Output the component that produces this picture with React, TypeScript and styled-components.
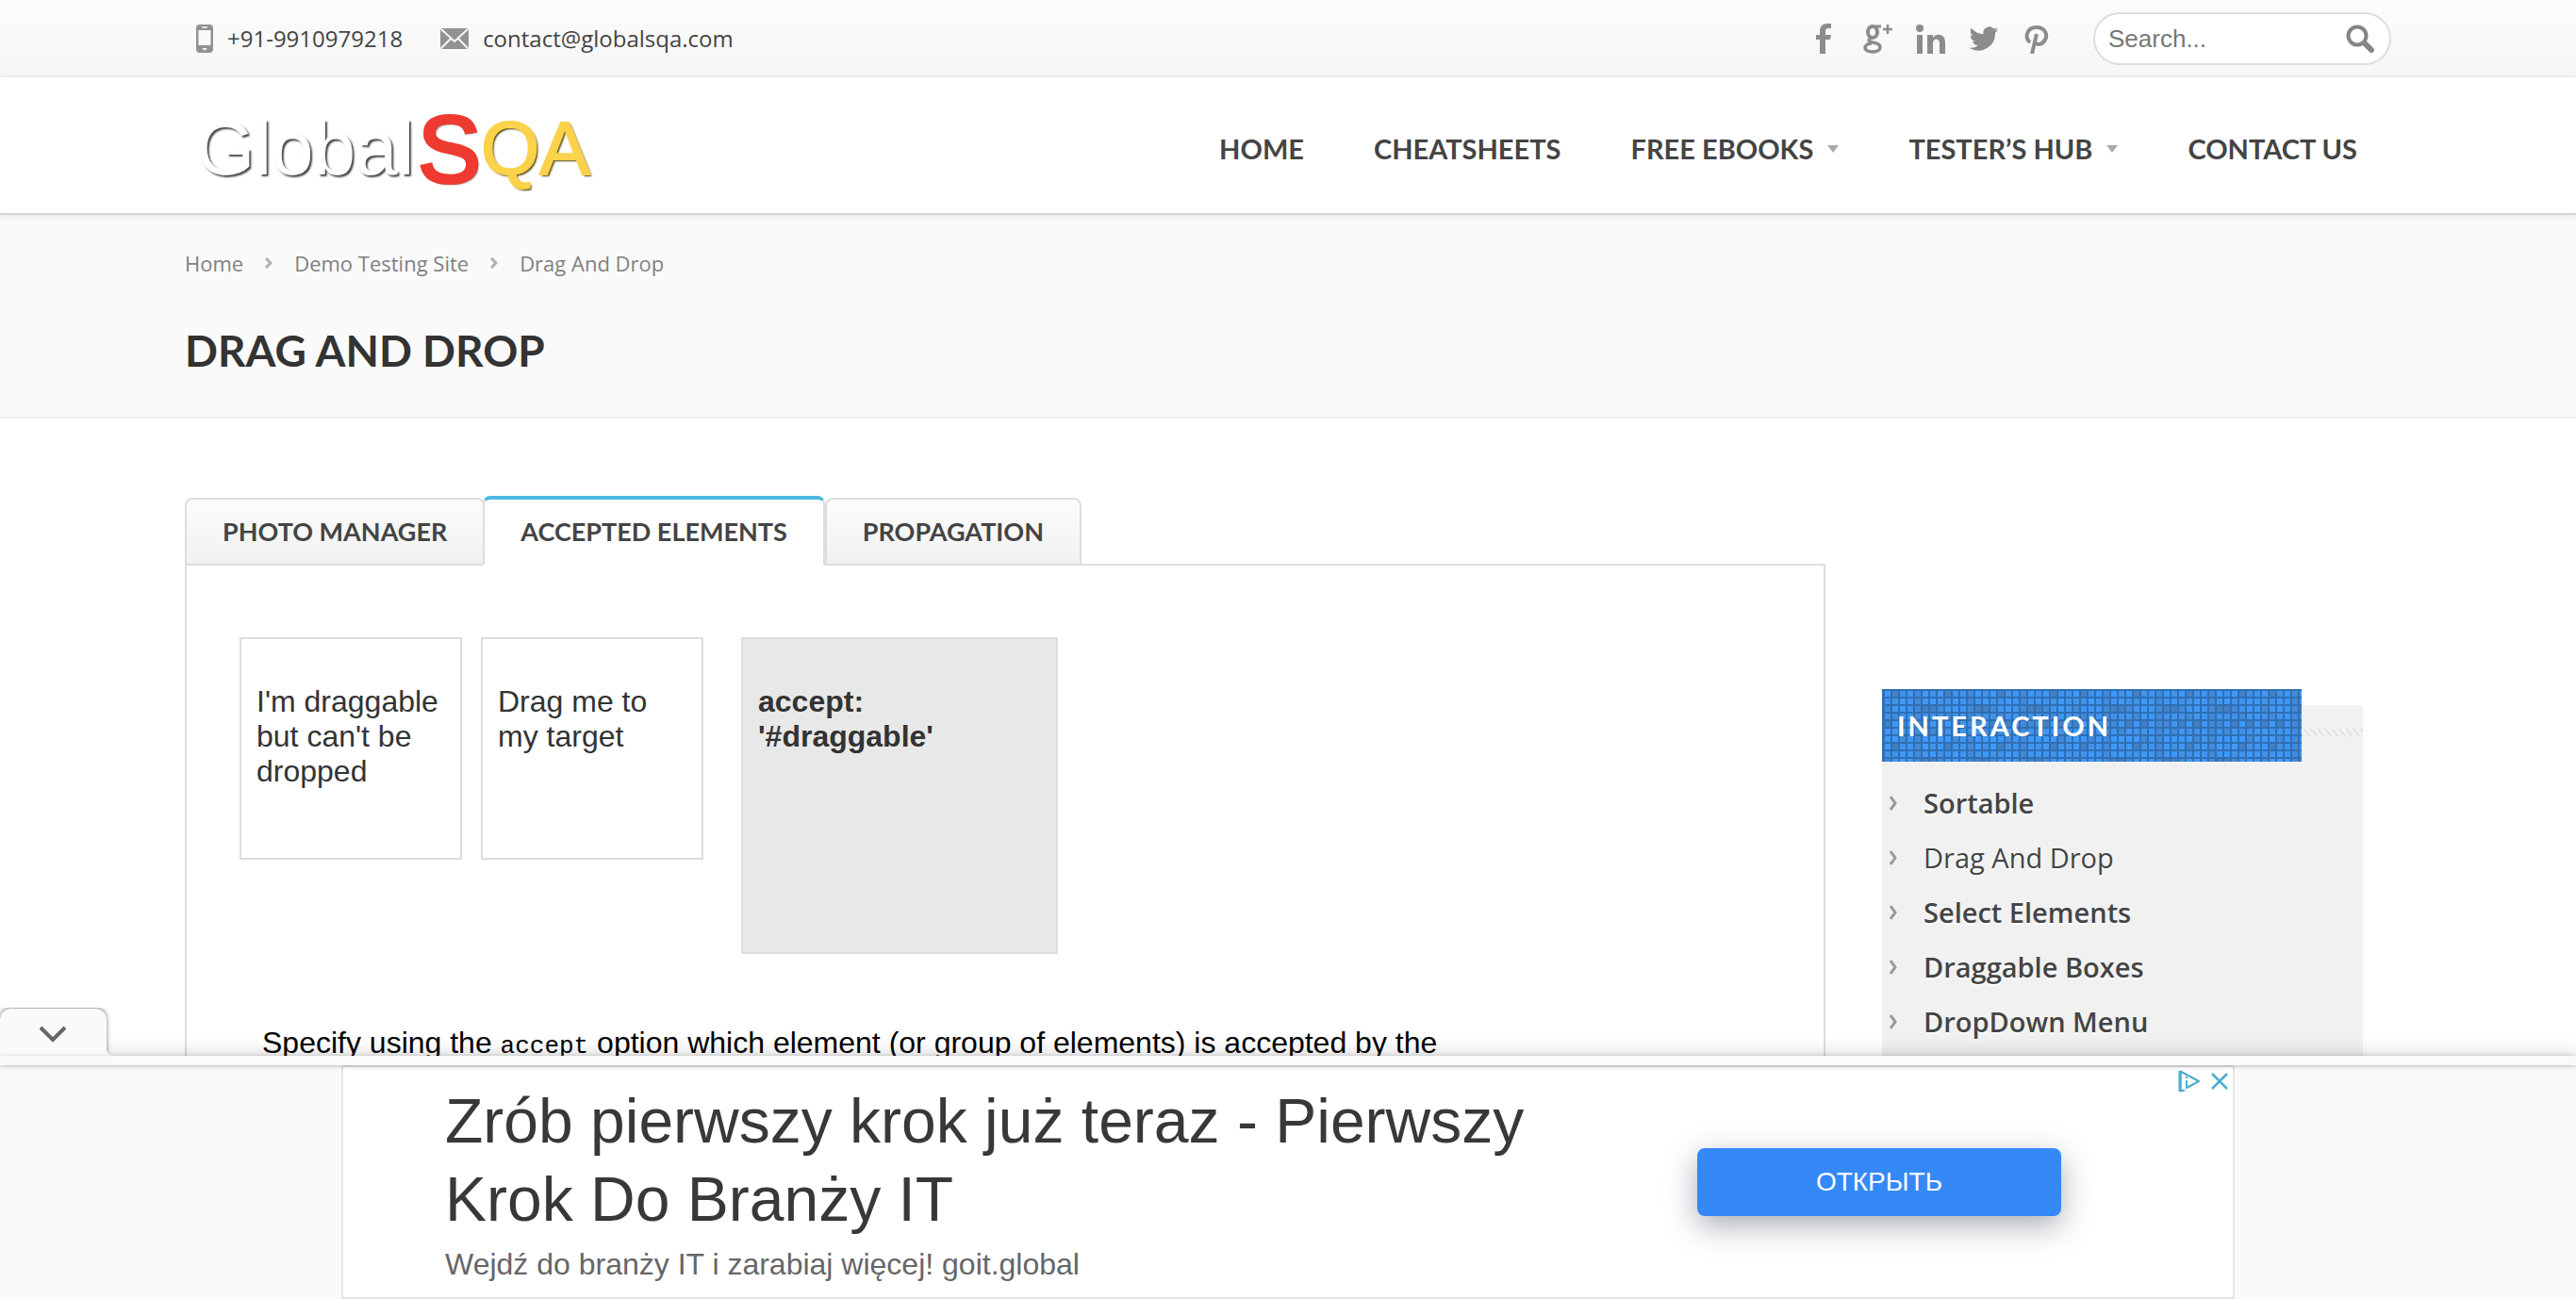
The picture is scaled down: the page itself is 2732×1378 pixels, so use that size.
import React from 'react';
import styled, { createGlobalStyle } from 'styled-components';

const display = "Lato, 'Open Sans', sans-serif";
const body = "'Open Sans', 'Noto Sans', sans-serif";
const arial = "'Liberation Sans', Arial, sans-serif";

const GlobalStyle = createGlobalStyle`
  *, *::before, *::after { box-sizing: border-box; }
  body { margin: 0; background: #fff; color: #444; font-family: ${body}; }
  a { color: inherit; text-decoration: none; }
  ul, ol { list-style: none; margin: 0; padding: 0; }
  button { font: inherit; color: inherit; border: 0; background: none; padding: 0; cursor: pointer; }
`;

const Page = styled.div`
  display: flex;
  flex-direction: column;
  height: 100vh;
  overflow: hidden;
`;

const Container = styled.div`
  width: 100%;
  max-width: 2340px;
  margin: 0 auto;
`;

const TopBar = styled.div`
  flex: none;
  background: linear-gradient(#fcfcfc, #f6f6f6);
  border-bottom: 2px solid #eee;
`;

const TopRow = styled(Container)`
  display: flex;
  align-items: center;
  padding: 13px 0 11px 12px;
`;

const Contact = styled.a`
  display: flex;
  align-items: center;
  gap: 15px;
  margin-right: 40px;
  font-size: 24px;
  line-height: 32px;
`;

const Socials = styled.nav`
  display: flex;
  align-items: center;
  gap: 24px;
  margin: 0 44px 0 auto;
  color: #8b8c8d;

  a { display: flex; }
`;

const SearchForm = styled.form`
  display: flex;
  align-items: center;
  width: 316px;
  height: 56px;
  padding: 0 16px 0 14px;
  background: #fff;
  border: 2px solid #ddd;
  border-radius: 28px;
`;

const SearchInput = styled.input`
  flex: 1;
  min-width: 0;
  border: 0;
  padding: 0;
  outline: 0;
  background: transparent;
  color: #444;
  font: 26px ${arial};

  &::placeholder { color: #777; opacity: 1; }
`;

const SearchButton = styled.button`
  display: flex;
`;

const Header = styled.header`
  flex: none;
  position: relative;
  background: #fff;
  box-shadow: 0 2px 1px #d8d8d8, 0 3px 8px rgba(0, 0, 0, 0.1);
`;

const HeaderRow = styled(Container)`
  display: flex;
  align-items: center;
  justify-content: space-between;
  height: 144px;
  padding: 8px 36px 0 12px;
`;

const Logo = styled.a`
  display: flex;
  align-items: center;
  font: 80px/104px ${arial};
`;

const LogoGlobal = styled.span`
  color: #fff;
  text-shadow: 2px 2px 2px #444;
`;

const LogoS = styled.span`
  margin-left: 4px;
  font-size: 100px;
  color: #ee3a30;
  -webkit-text-stroke: 4px #ee3a30;
  text-shadow: 2px 2px 2px #777;
`;

const LogoQA = styled.span`
  color: #fbd24a;
  -webkit-text-stroke: 2px #fbd24a;
  text-shadow: 2px 2px 2px #554400;
`;

const Menu = styled.nav`
  display: flex;
  gap: 74px;
  font: 700 29px/36px ${display};
`;

const MenuLink = styled.a`
  display: flex;
  align-items: center;
  gap: 15px;
`;

const Caret = styled.i`
  border: 6px solid transparent;
  border-top: 8px solid #aaa;
  border-bottom: 0;
`;

const Heading = styled.section`
  flex: none;
  background: #fafafa;
  border-bottom: 2px solid #eee;
`;

const HeadingInner = styled(Container)`
  display: flex;
  flex-direction: column;
  gap: 48px;
  padding: 38px 0 40px;
`;

const Crumbs = styled.ol`
  display: flex;
  align-items: center;
  gap: 23px;
  font-size: 22px;
  line-height: 30px;
  color: #808080;

  li { display: flex; align-items: center; gap: 23px; }
`;

const Title = styled.h1`
  margin: 0;
  font: 700 46px/60px ${display};
  color: #333;
`;

const Main = styled(Container)`
  flex: 1;
  min-height: 0;
  display: flex;
  gap: 60px;
  padding-top: 82px;
`;

const Demo = styled.main`
  flex: 1;
  min-width: 0;
  display: flex;
  flex-direction: column;
`;

const Tabs = styled.div`
  display: flex;
  align-items: flex-end;
  margin-bottom: -2px;
`;

const Tab = styled.button<{ $active?: boolean }>`
  height: ${p => (p.$active ? 74 : 72)}px;
  margin-right: ${p => (p.$active ? 0 : -2)}px;
  padding: 0 38px;
  font: 700 27px/36px ${display};
  color: #444;
  border: 2px solid #ddd;
  border-top: ${p => (p.$active ? '4px solid #4fb9e0' : '2px solid #ddd')};
  border-bottom-color: ${p => (p.$active ? '#fff' : '#ddd')};
  border-radius: 8px 8px 0 0;
  background: ${p => (p.$active ? '#fff' : 'linear-gradient(#fcfcfc, #f1f1f1)')};
  z-index: ${p => (p.$active ? 1 : 0)};
`;

const Panel = styled.div`
  flex: 1;
  padding: 76px 56px 0;
  border: 2px solid #ddd;
  border-bottom: 0;
`;

const Boxes = styled.div`
  display: flex;
  align-items: flex-start;
  gap: 20px;
  font: 32px/37px ${arial};
  color: #333;
`;

const Draggable = styled.div`
  width: 236px;
  height: 236px;
  padding: 48px 16px;
  border: 2px solid #ddd;

  p { margin: 0; }
`;

const Droppable = styled(Draggable)`
  width: 336px;
  height: 336px;
  margin-left: 20px;
  background: #e8e8e8;
  font-weight: 700;
`;

const Note = styled.p`
  margin: 76px 24px 0;
  font: 32px/37px ${arial};
  color: #000;

  code { font: 26px 'Liberation Mono', monospace; }
`;

const Sidebar = styled.aside`
  width: 510px;
  margin: 222px 30px 0 0;
  background: #f1f1f1;
`;

const SideHead = styled.div`
  display: flex;
  align-items: center;
  height: 60px;
`;

const SideTitle = styled.h2`
  position: relative;
  flex: none;
  display: flex;
  align-items: center;
  width: 445px;
  height: 77px;
  margin: -17px 0 0;
  padding-left: 16px;
  overflow: hidden;
  background: #3d99fb;
  font: 700 29px/36px ${display};
  letter-spacing: 3px;
  color: #fff;

  svg { position: absolute; inset: 0; }
  span { position: relative; }
`;

const Hatch = styled.div`
  flex: 1;
  height: 8px;
  margin-top: -2px;
  background: repeating-linear-gradient(53deg, #ddd 0 1px, #f1f1f1 2px 6px);
`;

const SideList = styled.ul`
  padding: 15px 0 0 8px;
`;

const SideItem = styled.li<{ $current?: boolean }>`
  a {
    display: flex;
    align-items: center;
    gap: 28px;
    font-size: 29px;
    line-height: 58px;
    font-weight: ${p => (p.$current ? 400 : 600)};
    color: #444;
    text-shadow: 0 2px 0 #fff;
  }
`;

const AdDock = styled.section`
  position: fixed;
  left: 0;
  right: 0;
  bottom: 0;
  background: #fafafa;
  box-shadow: 0 0 20px rgba(0, 0, 0, 0.2);
`;

const AdStrip = styled.div`
  position: relative;
  z-index: 1;
  height: 10px;
  background: #fafafa;
  box-shadow: 0 1px 5px rgba(0, 0, 0, 0.25);
`;

const Collapse = styled.button`
  position: absolute;
  left: 0;
  bottom: 100%;
  width: 113px;
  height: 50px;
  padding: 4px 0 0 41px;
  background: #fafafa;
  border-radius: 12px 12px 0 0;
  box-shadow: 0 -1px 5px rgba(0, 0, 0, 0.5);
  clip-path: inset(-1px -20px 0 0);

  svg { display: block; }

  &::after {
    content: '';
    position: absolute;
    left: 100%;
    bottom: 0;
    width: 8px;
    height: 8px;
    background: radial-gradient(circle at 100% 0, transparent 8px, #fafafa 8px);
  }
`;

const AdCard = styled.div`
  position: relative;
  display: grid;
  grid-template-columns: 1328px 386px;
  width: 2008px;
  max-width: 100%;
  margin: 0 auto;
  padding: 16px 108px 15px;
  background: #fff;
  border: 2px solid #e5e5e5;
`;

const AdTitle = styled.h3`
  width: 1200px;
  margin: 0;
  font: 66px/83px ${arial};
  color: #383838;
`;

const AdText = styled.p`
  margin: 7px 0 0;
  font: 32px/40px ${arial};
  color: #666;
`;

const AdButton = styled.a`
  display: flex;
  align-items: center;
  justify-content: center;
  height: 72px;
  margin-top: 70px;
  background: #3489f7;
  border-radius: 8px;
  box-shadow: 0 10px 32px rgba(30, 40, 60, 0.38);
  font: 28px/36px ${arial};
  color: #fff;
`;

const AdChoices = styled.div`
  position: absolute;
  top: 3px;
  right: 5px;
  display: flex;
  align-items: center;
  gap: 11px;

  a, button { display: flex; }
`;

const Chevron = ({ color, height }: { color: string; height: number }) => (
  <svg width="8" height={height} viewBox={`0 0 8 ${height}`} fill="none" stroke={color} strokeWidth="3">
    <path d={`M1 1 6 ${height / 2} 1 ${height - 1}`} />
  </svg>
);

const tileShades = ['#3d99fb', '#4193ea', '#3d99fb', '#4489d6', '#3f96f2', '#4193ea', '#447fc2'];

const Mosaic = () => {
  const tiles: React.ReactNode[] = [];
  for (let row = 0; row < 10; row++) {
    for (let col = 0; col < 56; col++) {
      const n = (col % 25) * 13 + row * 5 + (col % 25) * (col % 25) * row;
      tiles.push(
        <rect key={`${row}-${col}`} x={col * 8 + 3} y={row * 8 + 2} width="6" height="6" fill={tileShades[n % 7]} />
      );
    }
  }
  return (
    <svg width="445" height="77" aria-hidden="true">
      <rect width="445" height="77" fill="#2f6fb4" />
      {tiles}
    </svg>
  );
};

const menu = [
  { label: 'HOME' },
  { label: 'CHEATSHEETS' },
  { label: 'FREE EBOOKS', sub: true },
  { label: 'TESTER’S HUB', sub: true },
  { label: 'CONTACT US' },
];

const interactions = ['Sortable', 'Drag And Drop', 'Select Elements', 'Draggable Boxes', 'DropDown Menu'];

export default function App() {
  return (
    <Page>
      <GlobalStyle />
      <TopBar>
        <TopRow>
          <Contact href="tel:+919910979218">
            <svg width="18" height="30" viewBox="0 0 18 30">
              <rect width="18" height="30" rx="4" fill="#929292" />
              <rect x="2.500" y="6" width="13" height="16" fill="#fafafa" />
              <rect x="6" y="2" width="6" height="2" fill="#ddd" />
              <path d="M6 25h6l-3 3z" fill="#eee" />
            </svg>
            +91-9910979218
          </Contact>
          <Contact href="mailto:contact@globalsqa.com">
            <svg width="30" height="22" viewBox="0 0 30 22">
              <rect width="30" height="22" rx="3" fill="#929292" />
              <path d="M1 1l14 13L29 1M1 21l10-10M29 21 19 11" fill="none" stroke="#f6f6f6" strokeWidth="2" />
            </svg>
            contact@globalsqa.com
          </Contact>
          <Socials aria-label="Social">
            <a href="#facebook" aria-label="Facebook">
              <svg width="28" height="32" viewBox="0 0 28 32" fill="currentColor">
                <path d="M6 32V17H2v-5h4V8c0-5 3-8 8-8h4v5h-3c-2 0-3 1-3 3v4h6l-1 5h-5v15z" />
              </svg>
            </a>
            <a href="#google" aria-label="Google Plus">
              <svg width="32" height="32" viewBox="0 0 32 32" fill="none" stroke="currentColor">
                <ellipse cx="10" cy="9" rx="5" ry="6" strokeWidth="4" />
                <path d="M13 3h6" strokeWidth="3" />
                <path d="M9 15c-4 2-4 4 1 5 6 1 8 3 8 5 0 3-3 5-8 5s-8-2-8-4 2-5 7-5" strokeWidth="3.500" />
                <path d="M26 1v10M21 6h10" strokeWidth="2.500" />
              </svg>
            </a>
            <a href="#linkedin" aria-label="LinkedIn">
              <svg width="32" height="32" viewBox="0 0 32 32" fill="currentColor">
                <circle cx="4" cy="5" r="4" />
                <path d="M1 12h6v20H1zM12 12h6v3c3-5 13-5 13 5v12h-6V21c0-6-7-6-7 0v11h-6z" />
              </svg>
            </a>
            <a href="#twitter" aria-label="Twitter">
              <svg width="32" height="32" viewBox="0 0 24 24" fill="currentColor">
                <path d="M23.500 4.900a9.600 9.600 0 0 1-2.700.8 4.700 4.700 0 0 0 2-2.600 9.500 9.500 0 0 1-3 1.100 4.700 4.700 0 0 0-8.100 4.300A13.400 13.400 0 0 1 2 3.600a4.700 4.700 0 0 0 1.500 6.300 4.700 4.700 0 0 1-2.200-.6v.1a4.700 4.700 0 0 0 3.800 4.600 4.800 4.800 0 0 1-2.100.1 4.700 4.700 0 0 0 4.400 3.300A9.500 9.500 0 0 1 .4 19.300a13.400 13.400 0 0 0 20.600-11.900 9.600 9.600 0 0 0 2.500-2.500z" />
              </svg>
            </a>
            <a href="#pinterest" aria-label="Pinterest">
              <svg width="32" height="32" viewBox="0 0 32 32" fill="none" stroke="currentColor">
                <path d="M9 20c-6-5-4-16 7-16 9 0 12 8 9 13-3 6-9 6-11 3" strokeWidth="4" />
                <path d="M16 11 11 32" strokeWidth="4" />
              </svg>
            </a>
          </Socials>
          <SearchForm role="search">
            <SearchInput type="text" placeholder="Search..." aria-label="Search" />
            <SearchButton type="button" aria-label="Submit search">
              <svg width="30" height="30" viewBox="0 0 30 30" fill="none" stroke="#858585">
                <circle cx="12" cy="12" r="9.500" strokeWidth="4" />
                <path d="M20 20l7 7" strokeWidth="6" strokeLinecap="round" />
              </svg>
            </SearchButton>
          </SearchForm>
        </TopRow>
      </TopBar>

      <Header>
        <HeaderRow>
          <Logo href="#home">
            <LogoGlobal>Global</LogoGlobal>
            <LogoS>S</LogoS>
            <LogoQA>QA</LogoQA>
          </Logo>
          <Menu aria-label="Main">
            {menu.map(m => (
              <MenuLink key={m.label} href="#menu">
                {m.label}
                {m.sub && <Caret />}
              </MenuLink>
            ))}
          </Menu>
        </HeaderRow>
      </Header>

      <Heading>
        <HeadingInner>
          <Crumbs>
            <li><a href="#home">Home</a><Chevron color="#aab0b5" height={12} /></li>
            <li><a href="#demo">Demo Testing Site</a><Chevron color="#aab0b5" height={12} /></li>
            <li>Drag And Drop</li>
          </Crumbs>
          <Title>DRAG AND DROP</Title>
        </HeadingInner>
      </Heading>

      <Main>
        <Demo>
          <Tabs role="tablist">
            <Tab role="tab">PHOTO MANAGER</Tab>
            <Tab role="tab" $active aria-selected="true">ACCEPTED ELEMENTS</Tab>
            <Tab role="tab">PROPAGATION</Tab>
          </Tabs>
          <Panel role="tabpanel">
            <Boxes>
              <Draggable><p>I'm draggable but can't be dropped</p></Draggable>
              <Draggable><p>Drag me to my target</p></Draggable>
              <Droppable><p>accept: '#draggable'</p></Droppable>
            </Boxes>
            <Note>
              Specify using the <code>accept</code> option which element (or group of elements) is accepted by the
            </Note>
          </Panel>
        </Demo>
        <Sidebar>
          <SideHead>
            <SideTitle><Mosaic /><span>INTERACTION</span></SideTitle>
            <Hatch />
          </SideHead>
          <SideList>
            {interactions.map(name => (
              <SideItem key={name} $current={name === 'Drag And Drop'}>
                <a href="#interaction"><Chevron color="#999" height={16} />{name}</a>
              </SideItem>
            ))}
          </SideList>
        </Sidebar>
      </Main>

      <AdDock>
        <Collapse aria-label="Collapse ad">
          <svg width="30" height="18" viewBox="0 0 30 18" fill="none" stroke="#666" strokeWidth="4">
            <path d="M2 2l13 13L28 2" />
          </svg>
        </Collapse>
        <AdStrip />
        <AdCard>
          <div>
            <AdTitle>Zrób pierwszy krok już teraz - Pierwszy Krok Do Branży IT</AdTitle>
            <AdText>Wejdź do branży IT i zarabiaj więcej! goit.global</AdText>
          </div>
          <AdButton href="#open">ОТКРЫТЬ</AdButton>
          <AdChoices>
            <a href="#adchoices" aria-label="AdChoices">
              <svg width="24" height="24" viewBox="0 0 24 24" fill="none" stroke="#4aaccf" strokeWidth="2">
                <path d="M7 21.500 2.500 22.500V1.500L22 12 9 19v-8" strokeLinejoin="round" />
                <path d="M2 1v22" strokeWidth="3" />
                <path d="M9 7v2" />
              </svg>
            </a>
            <button aria-label="Close ad">
              <svg width="18" height="18" viewBox="0 0 18 18" fill="none" stroke="#4aaccf" strokeWidth="2.500">
                <path d="M1 1l16 16M17 1 1 17" />
              </svg>
            </button>
          </AdChoices>
        </AdCard>
      </AdDock>
    </Page>
  );
}
